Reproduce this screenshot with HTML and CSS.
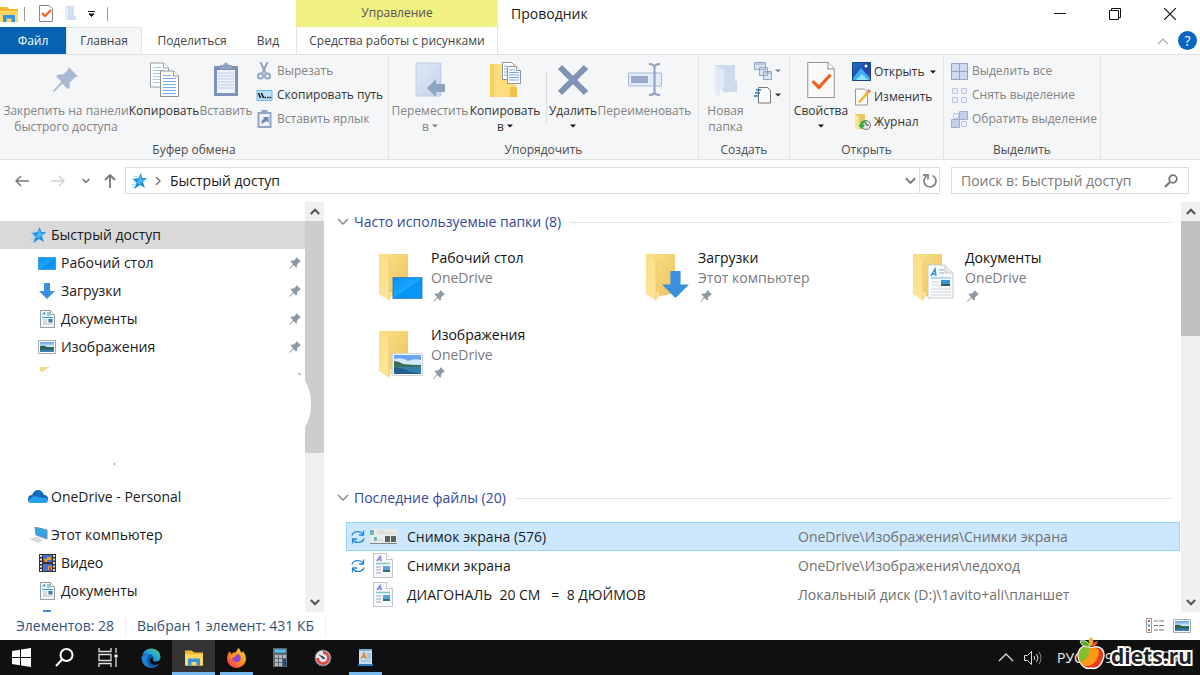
FILE: index.html
```html
<!DOCTYPE html>
<html lang="ru">
<head>
<meta charset="utf-8">
<title>Проводник</title>
<link rel="stylesheet" href="styles.css">
</head>
<body>
<svg class="defs" aria-hidden="true">
  <defs>
    <linearGradient id="gFolder" x1="0" y1="0" x2="1" y2="1"><stop offset="0" stop-color="#fbe08a"/><stop offset="1" stop-color="#e9c35c"/></linearGradient>
    <linearGradient id="gFlap" x1="0" y1="0" x2="1" y2="1"><stop offset="0" stop-color="#fbdc7e"/><stop offset="1" stop-color="#ffe9a6"/></linearGradient>
    <linearGradient id="gBlue" x1="0" y1="0" x2="1" y2="1"><stop offset="0" stop-color="#0a90f5"/><stop offset=".5" stop-color="#1ba6ff"/><stop offset=".52" stop-color="#0594f8"/><stop offset="1" stop-color="#0a98fb"/></linearGradient>
    <linearGradient id="gSky" x1="0" y1="0" x2="0" y2="1"><stop offset="0" stop-color="#5f9be8"/><stop offset=".45" stop-color="#d5ecfa"/><stop offset=".5" stop-color="#3f6f63"/><stop offset=".72" stop-color="#2f6a80"/><stop offset="1" stop-color="#3d8fc4"/></linearGradient>
    <linearGradient id="gPale" x1="0" y1="0" x2="1" y2="1"><stop offset="0" stop-color="#dfe8f5"/><stop offset="1" stop-color="#c5d4ea"/></linearGradient>
    <linearGradient id="gPhoto" x1="0" y1="0" x2="1" y2="1"><stop offset="0" stop-color="#1d78c8"/><stop offset=".6" stop-color="#1c46a0"/><stop offset="1" stop-color="#6b4bb0"/></linearGradient>
    <linearGradient id="gEdge" x1="0" y1="1" x2="1" y2="0"><stop offset="0" stop-color="#0c5fb4"/><stop offset=".5" stop-color="#1f9ede"/><stop offset="1" stop-color="#5fd36c"/></linearGradient>
    <linearGradient id="gFox" x1="1" y1="0" x2="0" y2="1"><stop offset="0" stop-color="#ffe03a"/><stop offset=".5" stop-color="#ff8a1e"/><stop offset="1" stop-color="#f0305a"/></linearGradient>
    <symbol id="pin" viewBox="0 0 24 24"><path d="M15 0 24 9l-3 1-5 5 0 5-2 1-5-5L1 24l-1-1 8-9-5-5 2-2 5 0 4-4z"/></symbol>
    <symbol id="star" viewBox="0 0 16 16"><path d="M3 3.500h3M1 6h4M2 9h3M1 12h4M1 14.500h3" stroke="#8fd0f5"/><path d="M9.500 0l2 5H16l-4 4 2 6-5-3-5.500 4 2-6.500L2 6l5.500-1z" fill="#1f93e0"/><path d="M9.500 2l1.300 4.500h3L9 11 6 10z" fill="#4cb6f3"/></symbol>
    <symbol id="desk" viewBox="0 0 18 13"><path d="M.5.500h17v12H.500z" fill="url(#gBlue)" stroke="#1279cc" stroke-width=".6"/></symbol>
    <symbol id="down" viewBox="0 0 16 16"><path d="M5 0h6v8h5l-8 8-8-8h5z" fill="#3b8fe0"/></symbol>
    <symbol id="doc" viewBox="0 0 15 18"><path d="M.5.500h10l4 4v13H.500z" fill="#f3f6f8" stroke="#979ca0"/><path d="M10.500.500v4h4" fill="#fff" stroke="#a5a9ac"/><path d="M2 5l2.500-3L5 5M7 3h3M7 5h3M2 7.500h11" stroke="#2f9ede" fill="none"/><path d="M3 10h4M3 12h4M3 14h9" stroke="#b7bdc2"/><path d="M8.500 9h4v3.500h-4z" fill="#3c7f9d"/></symbol>
    <symbol id="pic" viewBox="0 0 18 14"><path d="M.5.500h17v13H.500z" fill="#fff" stroke="#a8adb1"/><path d="M2 2h14v10H2z" fill="url(#gSky)"/><path d="M2 6q4-1 7 1 4 1 7 1v1H2z" fill="#305f50"/></symbol>
    <symbol id="photo" viewBox="0 0 31 23"><path d="M.5.500h30v22H.500z" fill="#f6f8fa" stroke="#cfd5da"/><path d="M2 2h27v19H2z" fill="#6aa3ee"/><path d="M2 6q9-2 14 2 6-3 13-1v5H2z" fill="#d4eafb"/><path d="M2 8q5 0 9 3 8 1 18 1v2H2z" fill="#3f6d55"/><path d="M2 14h27v7H2z" fill="#3780ad"/><path d="M2 14q10 1 14 4l13 3H2z" fill="#245f86"/></symbol>
    <symbol id="folder" viewBox="0 0 46 50"><path d="M1 1h29v39l-19 4z" fill="url(#gFolder)"/><path d="M1 1l10 6v31l3 2v1l-3 7L1 41z" fill="url(#gFlap)"/><path d="M11 7v40" stroke="#efca6b"/></symbol>
    <symbol id="pages" viewBox="0 0 29 35"><g fill="#fff" stroke="#9a9da1"><path d="M.5.500h13l5 5v19H.500z"/><path d="M13.500.500v5h5"/></g><path d="M3 5h8M3 8h12M3 11h12M3 14h12M3 17h12M3 20h12" stroke="#a9c9f2"/><g fill="#fff" stroke="#8f9296"><path d="M10.500 8.500h13l5 5v20.500h-18z"/><path d="M23.500 8.500v5h5"/></g><path d="M13 13h8M13 16h13M13 19h13M13 22h13M13 25h13M13 28h13M13 31h13" stroke="#74a9ee"/></symbol>
    <symbol id="check" viewBox="0 0 26 34"><path d="M.5.500h19l6 6v27H.500z" fill="#fafafa" stroke="#94979a"/><path d="M19.500.500v6h6" fill="#fff" stroke="#94979a"/><path d="M5 18l6 6L22 12" fill="none" stroke="#f4601c" stroke-width="3"/></symbol>
    <symbol id="chev" viewBox="0 0 12 8"><path d="M1 1l5 5 5-5" fill="none" stroke="currentColor" stroke-width="1.500"/></symbol>
    <symbol id="chevBold" viewBox="0 0 12 8"><path d="M1 1l5 5 5-5" fill="none" stroke="currentColor" stroke-width="2.500"/></symbol>
    <symbol id="chevUp" viewBox="0 0 12 8"><path d="M1 7l5-5 5 5" fill="none" stroke="currentColor" stroke-width="2.500"/></symbol>
    <symbol id="sync" viewBox="0 0 14 14"><path d="M1 5.500A6 5 0 0 1 12 4M13 8.500A6 5 0 0 1 2 10M12.500.500V5H8M1.500 13.500V9H6" fill="none" stroke="#2585d8" stroke-width="1.300"/></symbol>
    <symbol id="rdoc" viewBox="0 0 20 25"><path d="M.5.500h13l6 6v18H.500z" fill="#f8f9fa" stroke="#c3c6c9"/><path d="M13.500.500v6h6" fill="#fff" stroke="#c3c6c9"/><path d="M4 8l3-4 1 4" fill="none" stroke="#8d86e4" stroke-width="2"/><path d="M3 10.500h14" stroke="#7cc6c4" stroke-width="1.500"/><path d="M3 14h5M3 17h5M3 20h5" stroke="#bcc1df" stroke-width="1.500"/><path d="M10 13h7v6h-7z" fill="#5ba2d6"/><path d="M10 17h7v2h-7z" fill="#3c6f78"/></symbol>
    <symbol id="explorer" viewBox="0 0 18 16"><path d="M0 1h7l2 2h9v13H0z" fill="#f5b92e"/><path d="M0 5h18v11H0z" fill="#ffd766"/><path d="M3 16V9h12v7h-3.500v-3.500h-5V16z" fill="#3c93dc"/></symbol>
    <symbol id="tri" viewBox="0 0 6 4"><path d="M0 .5h6L3 3.500z" fill="currentColor"/></symbol>
  </defs>
</svg>

<header class="head">
  <div class="qat">
    <svg width="18" height="16"><use href="#explorer"/></svg><i class="bar"></i>
    <svg class="qcheck" width="14" height="17" viewBox="0 0 14 17"><path d="M.5.500h10l3 3v13H.500z" fill="#fff" stroke="#888"/><path d="M3 8l3 3 6-6" fill="none" stroke="#f4601c" stroke-width="2"/></svg>
    <svg class="qnew" width="11" height="15" viewBox="0 0 11 15"><path d="M0 0h9v10h2v4H0z" fill="#d3dff0"/><path d="M0 0l3 2v12l-3 1z" fill="#e6eef8"/></svg>
    <svg class="qmenu" width="7" height="6" viewBox="0 0 7 6"><path d="M0 .5h7M1 3h5L3.500 5.500z" stroke="#111" fill="#111" stroke-width="1"/></svg><i class="bar"></i>
  </div>
  <div class="ctx">Управление</div>
  <div class="title">Проводник</div>
  <div class="winbtns">
    <button aria-label="Свернуть"><svg width="12" height="12" viewBox="0 0 12 12"><path d="M0 5.500h12" stroke="#111"/></svg></button>
    <button aria-label="Окно"><svg width="12" height="12" viewBox="0 0 12 12"><path d="M.5 2.500h9v9h-9zM2.500 2V.500h9v9H10" stroke="#111" fill="none"/></svg></button>
    <button aria-label="Закрыть"><svg width="12" height="12" viewBox="0 0 12 12"><path d="M0 0l12 12M12 0L0 12" stroke="#111" stroke-width="1.200"/></svg></button>
  </div>
  <nav class="tabs">
    <button class="tab file">Файл</button><button class="tab on">Главная</button><button class="tab">Поделиться</button><button class="tab view">Вид</button>
  </nav>
  <button class="tab ctxtab">Средства работы с рисунками</button>
  <div class="help"><svg class="gray" width="12" height="8" viewBox="0 0 12 8"><path d="M1 7l5-5 5 5" fill="none" stroke="currentColor" stroke-width="1.200"/></svg><button class="q" aria-label="Справка">?</button></div>
</header>

<section class="ribbon">
  <div class="group g1">
    <div class="tools">
      <button class="big off"><svg width="26" height="36" viewBox="0 -5 26 36" fill="#a9b9d3"><use href="#pin" width="25" height="25"/></svg><span>Закрепить на панели<br>быстрого доступа</span></button>
      <button class="big"><svg width="29" height="36"><use href="#pages"/></svg><span>Копировать</span></button>
      <button class="big off"><svg width="26" height="36" viewBox="0 0 26 36"><path d="M1 4h24v30H1z" fill="#7d92b8" /><path d="M4 8h18v23H4z" fill="#eef3fb"/><path d="M5 11h16M5 14h16M5 17h16M5 20h16M5 23h16M5 26h16" stroke="#bccbe4"/><path d="M7 3h3q3-5 6 0h3v4H7z" fill="#8fa2c4"/></svg><span>Вставить</span></button>
      <div class="small">
        <button class="off"><svg width="16" height="18" viewBox="0 0 16 18" fill="none" stroke="#93a5c6" stroke-width="2"><path d="M4 0l5 11M11 0L6 11"/><circle cx="4" cy="14" r="2.500"/><circle cx="11" cy="14" r="2.500"/></svg>Вырезать</button>
        <button><svg width="16" height="11" viewBox="0 0 16 11"><path d="M.5.500h15v10H.500z" fill="#b9e2fa" stroke="#6fb5df"/><path d="M2 3l2 5M5 3l2 5M8 7.500h1.500M10.500 7.500H12M13 7.500h1.500" stroke="#111" stroke-width="1.500"/></svg>Скопировать путь</button>
        <button class="off"><svg width="14" height="18" viewBox="0 0 14 18"><path d="M1 3h12v14H1z" fill="#eef3fb" stroke="#93a5c6" stroke-width="2"/><path d="M4 0h6v4H4z" fill="#93a5c6"/><path d="M4 14V11l3-3-2-1h6v6l-2-2z" fill="#6f86ad"/></svg>Вставить ярлык</button>
      </div>
    </div>
    <div class="cap">Буфер обмена</div>
  </div>
  <div class="group g2">
    <div class="tools">
      <button class="big off"><svg width="32" height="36" viewBox="0 0 32 36"><path d="M2 1h25v33H2z" fill="url(#gPale)" stroke="#bfcfe7"/><path d="M13 26l9-9v5h9v8h-9v5z" fill="#8fa3c4"/></svg><span>Переместить<br>в <svg class="tri" width="6" height="4"><use href="#tri"/></svg></span></button>
      <button class="big"><svg width="32" height="36" viewBox="0 0 32 36"><path d="M1 2h26v33H1z" fill="#ffdd7c"/><path d="M1 2h4v33H1z" fill="#fbd063"/><path d="M21 25h7v10h-7z" fill="#f0c14c"/><g fill="#fff" stroke="#8f9296"><path d="M13.500.500h9l3 3v14h-12z"/><path d="M18.500 4.500h9l4 4v13h-13z"/><path d="M27.500 4.500v4h4"/></g><path d="M15 4h3M15 7h3M15 10h3M15 13h3M20 8h6M20 10.500h10M20 13h10M20 15.500h10M20 18h10" stroke="#74a9ee"/></svg><span>Копировать<br>в <svg class="tri" width="6" height="4"><use href="#tri"/></svg></span></button>
      <i class="sep"></i>
      <button class="big"><svg width="30" height="36" viewBox="0 0 30 36"><path d="M2 5l26 26M28 5L2 31" stroke="#8093b5" stroke-width="6"/></svg><span>Удалить<br><svg class="tri" width="6" height="4"><use href="#tri"/></svg></span></button>
      <button class="big off"><svg width="34" height="36" viewBox="0 0 34 36"><path d="M.5 11h33v13H.500z" fill="#e3ecf8" stroke="#a8bad8"/><path d="M3 14h17v7H3z" fill="#9aacca"/><path d="M21 2q5 0 5.500 3Q27 2 32 2M26.500 4v27M21 33q5 0 5.500-3 .5 3 5.500 3" fill="none" stroke="#8b9fc0" stroke-width="2"/></svg><span>Переименовать</span></button>
    </div>
    <div class="cap">Упорядочить</div>
  </div>
  <div class="group g3">
    <div class="tools">
      <button class="big off"><svg width="24" height="36" viewBox="0 0 24 36"><path d="M1 3h20v16h2v11H9z" fill="#cddbee"/><path d="M1 3l9 5v18l-4 3v6l-5-3z" fill="#e1eaf6"/></svg><span>Новая<br>папка</span></button>
      <div class="mini">
        <button aria-label="Создать элемент" class="off"><svg width="18" height="18" viewBox="0 0 18 18" fill="#dbe5f3" stroke="#93a7ca"><path d="M.5.500h11v7H.500zM5.500 5.500h8v8h-8zM9.500 9.500h8v8h-8zM.5 2h11M9.500 11h8"/></svg><svg width="6" height="4"><use href="#tri"/></svg></button>
        <button aria-label="Простой доступ"><svg width="18" height="18" viewBox="0 0 18 18"><path d="M4.500 1.500h9l3 3v12.500h-12z" fill="#fafafa" stroke="#777"/><path d="M2 4h5M1 7h5M0 10h4" stroke="#2878b8" stroke-width="1.500"/></svg><svg width="6" height="4"><use href="#tri"/></svg></button>
      </div>
    </div>
    <div class="cap">Создать</div>
  </div>
  <div class="group g4">
    <div class="tools">
      <button class="big"><svg width="28" height="36"><use href="#check"/></svg><span>Свойства<br><svg class="tri" width="6" height="4"><use href="#tri"/></svg></span></button>
      <div class="small open">
        <button><svg width="19" height="19" viewBox="0 0 19 19"><path d="M.5.500h18v18H.500z" fill="url(#gPhoto)" stroke="#183f8c"/><path d="M1 16L9 6l9 10v2H1z" fill="#3aaef0"/><path d="M4 18l6-6 6 6z" fill="#8ee2fb"/><circle cx="14" cy="4" r="1.500" fill="#fff"/></svg>Открыть <svg class="tri" width="6" height="4"><use href="#tri"/></svg></button>
        <button><svg width="19" height="18" viewBox="-3 0 19 18"><path d="M.5 1h9l3 3v13H.500z" fill="#fafafa" stroke="#999"/><path d="M3 14L13 2l2 2L5 15z" fill="#f2b632"/><path d="M12 3l1.500-2 2.500 2-1.500 2z" fill="#e77b70"/></svg>Изменить</button>
        <button><svg width="19" height="18" viewBox="-3 0 19 18"><path d="M0 1h10v15H4z" fill="#edc75f"/><path d="M0 1l4 3v13l-4-2z" fill="#ffe596"/><circle cx="11" cy="12" r="4.500" fill="#e4e7e4" stroke="#777"/><path d="M11 9v3h3" fill="none" stroke="#555"/><path d="M10 7q-5 1-5 5H3l4 4 3-4H8q0-2 3-2z" fill="#35a94b"/></svg>Журнал</button>
      </div>
    </div>
    <div class="cap">Открыть</div>
  </div>
  <div class="group g5">
    <div class="tools">
      <div class="small off">
        <button><svg width="17" height="17" viewBox="0 0 17 17"><path d="M.5.500h16v16H.500zM8.500 0v17M0 8.500h17" fill="#cfdbed" stroke="#8fa5cb"/></svg>Выделить все</button>
        <button><svg width="17" height="17" viewBox="0 0 17 17"><path d="M1.500 1.500h5v5h-5zM10.500 1.500h5v5h-5zM1.500 10.500h5v5h-5zM10.500 10.500h5v5h-5z" fill="#eaf0f9" stroke="#b8c8e2"/></svg>Снять выделение</button>
        <button><svg width="17" height="17" viewBox="0 0 17 17"><path d="M2.500 2.500h5v5h-5zM10.500 10.500h5v5h-5z" fill="#eaf0f9" stroke="#b8c8e2"/><path d="M8.500.500h8v8h-8zM.5 8.500h8v8h-8z" fill="#c3d1e8" stroke="#9db0d0"/></svg>Обратить выделение</button>
      </div>
    </div>
    <div class="cap">Выделить</div>
  </div>
</section>

<div class="nav">
  <div class="arrows">
    <button aria-label="Назад"><svg width="14" height="12" viewBox="0 0 14 12"><path d="M14 6H1M6 1L1 6l5 5" fill="none" stroke="#777" stroke-width="1.500"/></svg></button>
    <button aria-label="Вперёд"><svg width="14" height="12" viewBox="0 0 14 12"><path d="M0 6h13M8 1l5 5-5 5" fill="none" stroke="#d0d0d0" stroke-width="1.500"/></svg></button>
    <button aria-label="Последние"><svg width="8" height="6"><use href="#chevBold"/></svg></button>
    <button aria-label="Вверх"><svg width="12" height="14" viewBox="0 0 12 14"><path d="M6 14V1M1 6l5-5 5 5" fill="none" stroke="#777" stroke-width="1.800"/></svg></button>
  </div>
  <div class="addr">
    <svg width="16" height="16"><use href="#star"/></svg>
    <svg class="crumb" width="6" height="8" viewBox="0 0 6 8"><path d="M1 0l4 4-4 4" fill="none" stroke="#777" stroke-width="1.500"/></svg>
    <span>Быстрый доступ</span>
    <button class="drop" aria-label="Показать журнал"><svg width="11" height="8" viewBox="0 0 12 8"><path d="M1 1l5 5 5-5" fill="none" stroke="currentColor" stroke-width="2"/></svg></button>
    <button class="ref" aria-label="Обновить"><svg width="14" height="15" viewBox="0 0 14 15"><path d="M9.500 2.500A6 6 0 1 1 3.500 3M0 2h5v4.500" fill="none" stroke="#888" stroke-width="1.800"/></svg></button>
  </div>
  <label class="search"><input type="text" placeholder="Поиск в: Быстрый доступ" aria-label="Поиск"><svg width="14" height="14" viewBox="0 0 14 14"><circle cx="9" cy="5" r="3.800" fill="none" stroke="#777" stroke-width="1.800"/><path d="M6 8l-5 5" stroke="#777" stroke-width="2.200"/></svg></label>
</div>

<main class="work">
  <aside class="side">
    <ul>
      <li class="root sel"><svg width="16" height="16"><use href="#star"/></svg><span>Быстрый доступ</span></li>
      <li><svg width="18" height="13"><use href="#desk"/></svg><span>Рабочий стол</span><svg class="pin" width="12" height="12"><use href="#pin"/></svg></li>
      <li><svg width="16" height="16"><use href="#down"/></svg><span>Загрузки</span><svg class="pin" width="12" height="12"><use href="#pin"/></svg></li>
      <li><svg width="15" height="18"><use href="#doc"/></svg><span>Документы</span><svg class="pin" width="12" height="12"><use href="#pin"/></svg></li>
      <li><svg width="18" height="14"><use href="#pic"/></svg><span>Изображения</span><svg class="pin" width="12" height="12"><use href="#pin"/></svg></li>
      <li class="blank"><svg width="305" height="122" viewBox="0 0 305 122"><path d="M40 6h10l-5 3-2 2-3-1z" fill="#f5d987"/><path d="M298 12l3 2" stroke="#778"/><path d="M114 103h1" stroke="#446" stroke-width="1.500"/></svg></li>
      <li class="root"><svg width="20" height="14" viewBox="0 0 20 14"><path d="M4 13a4 4 0 0 1 0-8Q6 0 10 0q4 0 6 5a4 4 0 0 1 0 8z" fill="#0f6cbd"/><path d="M3 13q-2 0-3-2 2-3 6-5l8 2q5-1 6 3-1 2-3 2z" fill="#28a0ea"/></svg><span>OneDrive - Personal</span></li>
      <li class="root pc"><svg width="19" height="16" viewBox="0 0 19 16"><path d="M6 0l12 3v9L7 8z" fill="#35a3e8" stroke="#6f91a8"/><path d="M0 12l8-2 6 3-5 3z" fill="#d5dadf"/></svg><span>Этот компьютер</span></li>
      <li><svg width="17" height="18" viewBox="0 0 17 18"><path d="M0 0h17v18H0z" fill="#333"/><path d="M4 1h9v7H4zM4 10h9v7H4z" fill="#3f73d9"/><path d="M5 5h3v3H5zM8 3h4v3H8zM9 12h4v4H9z" fill="#e0a328"/><path d="M4 6h2v2H4zM10 13h2v3h-2z" fill="#c9402f"/><path d="M2 1v16M15 1v16" stroke="#ddd" stroke-width="2" stroke-dasharray="2 1.500"/></svg><span>Видео</span></li>
      <li><svg width="15" height="18"><use href="#doc"/></svg><span>Документы</span></li>
      <li class="next"><svg width="16" height="2"><path d="M4 0h8v2H4z" fill="#3b8fe0"/></svg></li>
    </ul>
    <div class="scroll left"><button aria-label="Вверх"><svg width="10" height="7"><use href="#chevUp"/></svg></button><div class="thumb"><svg width="19" height="46" viewBox="0 0 19 46"><path d="M0 0q6 9 6 23T0 46z" fill="#fff"/></svg></div><button class="end" aria-label="Вниз"><svg width="10" height="7"><use href="#chevBold"/></svg></button></div>
  </aside>
  <section class="content">
    <div class="pane">
      <h2><svg width="12" height="8"><use href="#chev"/></svg>Часто используемые папки (8)</h2>
      <div class="folders">
        <article><svg width="46" height="50"><use href="#folder"/><use href="#desk" x="14" y="24" width="31" height="22"/></svg><div><b>Рабочий стол</b><p>OneDrive</p><svg class="pin" width="12" height="12"><use href="#pin"/></svg></div></article>
        <article><svg width="46" height="50"><use href="#folder"/><use href="#down" x="17" y="18" width="27" height="27"/></svg><div><b>Загрузки</b><p>Этот компьютер</p><svg class="pin" width="12" height="12"><use href="#pin"/></svg></div></article>
        <article><svg width="46" height="50" viewBox="0 0 46 50"><use href="#folder" width="46" height="50"/><path d="M16 12h17l8 8v25H16z" fill="#fafbfc" stroke="#c6c9cc"/><path d="M33 12v8h8" fill="#e7eaec" stroke="#c6c9cc"/><path d="M19 23l4-7 1 7M20 21h4" stroke="#2d95dd" stroke-width="1.500" fill="none"/><path d="M27 17h5M27 20h5M19 25h20" stroke="#62b3e7"/><path d="M19 29h8M19 32h8M19 36h20M19 39h20M19 42h20" stroke="#d0d4d7"/><path d="M29 27h9v6h-9z" fill="#3b93cd"/><path d="M29 31h9v2h-9z" fill="#345f55"/></svg><div><b>Документы</b><p>OneDrive</p><svg class="pin" width="12" height="12"><use href="#pin"/></svg></div></article>
        <article><svg width="46" height="50"><use href="#folder"/><use href="#photo" x="14" y="23" width="31" height="23"/></svg><div><b>Изображения</b><p>OneDrive</p><svg class="pin" width="12" height="12"><use href="#pin"/></svg></div></article>
      </div>
      <h2><svg width="12" height="8"><use href="#chev"/></svg>Последние файлы (20)</h2>
      <table>
        <tr class="sel"><td class="ic"><svg width="14" height="14"><use href="#sync"/></svg></td><td class="th"><svg width="27" height="15" viewBox="0 0 27 15"><path d="M0 0h27v15H0z" fill="#e9ece8"/><path d="M0 1h4v5H0zM4 8h3v4H4z" fill="#6fb3bd"/><path d="M7 2h8M7 4h17M5 11h8" stroke="#c9cfcc"/><path d="M15 7h5v6h-5zM21 7h5v6h-5z" fill="#57635f"/><path d="M0 14.500h27" stroke="#7d868d"/></svg></td><td>Снимок экрана (576)</td><td class="path">OneDrive\Изображения\Снимки экрана</td></tr>
        <tr><td class="ic"><svg width="14" height="14"><use href="#sync"/></svg></td><td class="th"><svg width="20" height="25"><use href="#rdoc"/></svg></td><td>Снимки экрана</td><td class="path">OneDrive\Изображения\ледоход</td></tr>
        <tr><td class="ic"></td><td class="th"><svg width="20" height="25"><use href="#rdoc"/></svg></td><td class="pre">ДИАГОНАЛЬ  20 СМ   =  8 ДЮЙМОВ</td><td class="path">Локальный диск (D:)\1avito+ali\планшет</td></tr>
      </table>
    </div>
    <div class="scroll right"><button aria-label="Вверх"><svg width="10" height="7"><use href="#chevUp"/></svg></button><div class="thumb"></div><button class="end" aria-label="Вниз"><svg width="10" height="7"><use href="#chevBold"/></svg></button></div>
  </section>
</main>

<div class="status">
  <span>Элементов: 28</span><span>Выбран 1 элемент: 431 КБ</span>
  <div class="views">
    <button aria-label="Таблица"><svg width="18" height="16" viewBox="0 0 18 16"><path d="M.5.500h5v14h-5z" fill="#fff" stroke="#999"/><path d="M2 3h2M2 12h2" stroke="#c55" stroke-width="2"/><path d="M2 7.500h2" stroke="#48b" stroke-width="2"/><path d="M8 3h4M13 3h5M8 7.500h4M13 7.500h5M8 12h4M13 12h5" stroke="#777"/></svg></button>
    <button aria-label="Крупные значки"><svg width="18" height="14"><use href="#pic"/></svg></button>
  </div>
</div>

<footer class="task">
  <button aria-label="Пуск"><svg width="19" height="19" viewBox="0 0 19 19"><path d="M0 3l8-1.200V9H0zM9 1.600L19 0v9H9zM0 10h8v7.200L0 16zM9 10h10v9L9 17.400z" fill="#fff"/></svg></button>
  <button aria-label="Поиск"><svg width="19" height="19" viewBox="0 0 19 19"><circle cx="11.500" cy="7" r="6" fill="none" stroke="#fff" stroke-width="2"/><path d="M7 11.500l-6 6.500" stroke="#fff" stroke-width="2"/></svg></button>
  <button aria-label="Представление задач"><svg width="20" height="19" viewBox="0 0 20 19" fill="none" stroke="#ddd" stroke-width="1.300"><path d="M1 0v3.500h12V0M1 6.500h12v6H1zM1 19v-3.500h12V19M18 0v5M18 10v9"/><path d="M16.500 6.500h3v3h-3z" fill="#fff" stroke="none"/></svg></button>
  <button aria-label="Edge"><svg width="20" height="20" viewBox="0 0 20 20"><path d="M1 7Q4 0 11 .500q8 1 8.500 8 0 5-5 5-3 0-2.500-2 1-1 0-3-2-3-6-2.500-3 0-5 1z" fill="url(#gEdge)"/><path d="M.5 10Q1 6 6 6q5 0 6 4-2-1-3 1-1 4 3 6 3 1 6-1-3 4-8 4-9-1-9.500-10z" fill="#1c83d6"/><path d="M6 12q0-5 4-5 2 1 2 3-2-1-3 1-1 4 3 6 3 1 6-1-3 4-8 3-4-2-4-7z" fill="#0e56a6"/></svg></button>
  <button aria-label="Проводник" class="act"><svg width="18" height="17"><use href="#explorer"/></svg></button>
  <button aria-label="Firefox" class="run"><svg width="19" height="20" viewBox="0 0 19 20"><path d="M12 0q1 3 3 5l1-2q3 4 3 8a9.500 9 0 0 1-19 0Q0 6 3 3l1 3Q7 4 9 4q1-3 3-4z" fill="url(#gFox)"/><circle cx="9.500" cy="10" r="4.200" fill="#8c46d8"/><path d="M4 7q4-2 7 0-3 0-3 2-3 0-3 2-2-1-1-4z" fill="#ff9824"/></svg></button>
  <button aria-label="Калькулятор"><svg width="14" height="19" viewBox="0 0 14 19"><path d="M0 0h14v19H0z" fill="#5d6870"/><path d="M1.500 1.500h11v3h-11z" fill="#49c5f0"/><path d="M2 7h3v3H2zM6 7h3v3H6zM10 7h3v3h-3zM2 11h3v3H2zM6 11h3v3H6zM2 15h3v3H2zM6 15h3v3H6z" fill="#b4bbc1"/><path d="M10 11h3v7h-3z" fill="#154b87"/></svg></button>
  <button aria-label="Таймер"><svg width="18" height="18" viewBox="0 0 18 18"><circle cx="9" cy="9" r="8" fill="#dfe6ee" stroke="#5c6a7d"/><path d="M9 3.500A5.500 5.500 0 1 1 3.500 9" fill="none" stroke="#df4c3f" stroke-width="3"/><path d="M4 5l6 3 1 2-2 0z" fill="#333"/></svg></button>
  <button aria-label="WordPad" class="run"><svg width="15" height="17" viewBox="0 0 15 17"><path d="M1 0h13v14l1 3H0l1-3z" fill="#c6dff2"/><path d="M1 0h13v2H1z" fill="#6fb0df"/><path d="M3 10l3-6 2 6M4 8h4" fill="none" stroke="#e38a35" stroke-width="1.600"/><path d="M9 5h4M9 7h4M9 9h4M3 12h9" stroke="#86a9c8"/><path d="M0 15h15v2H0z" fill="#3178b8"/></svg></button>
  <div class="tray"><svg width="16" height="9" viewBox="0 0 16 9"><path d="M1 8l7-7 7 7" fill="none" stroke="#ddd" stroke-width="1.300"/></svg><svg width="19" height="14" viewBox="0 0 19 14" fill="none" stroke="#ddd"><path d="M.5 4.500h3l4-4v13l-4-4h-3zM10 5q1.500 2 0 4M12.500 3q3 4 0 8"/><path d="M15 1q4 6 0 12" stroke="#888"/></svg><span class="lang">РУС</span><span class="clock">19</span></div>
  <svg class="note" width="16" height="14" viewBox="0 0 16 14"><path d="M1 1h14v9h-4v3l-3-3H1z" fill="none" stroke="#ddd"/></svg>
  <div class="mark"><svg width="28" height="34" viewBox="0 0 28 34"><path d="M14 12Q7 8 3 13q-4 6 0 13 4 8 11 6 7 2 11-6 4-8 0-13-4-4-11-1z" fill="#e93a22" stroke="#fff" stroke-width="1.500"/><path d="M14 12Q7 9 3 14q-3 6 0 12 4 6 11 3 8-4 8-15-4-3-8-2z" fill="#fb9a18"/><path d="M3 14q4-5 10-2 0 10-9 14-4-6-1-12z" fill="#83bf2e"/><path d="M13 11Q4 11 3 5q8-2 10 6z" fill="#55ad28" stroke="#fff" stroke-width=".8"/><path d="M13 10Q10 4 14 1q4 3 1 9z" fill="#fba81c"/><path d="M15 11q0-5 6-6-1 5-6 6z" fill="#ed5b28"/></svg><span>diets.ru</span></div>
</footer>
</body>
</html>
```
FILE: styles.css
```css
* { box-sizing: border-box; }
body { margin: 0; height: 100vh; display: flex; flex-direction: column; overflow: hidden; background: #fff; color: #1a1a1a; font: 14px/20px "Open Sans", "Noto Sans", sans-serif; }
button { padding: 0; border: 0; background: none; color: inherit; font: inherit; display: flex; align-items: center; justify-content: center; white-space: nowrap; }
svg { display: block; flex: none; }
ul, h2, p { margin: 0; padding: 0; }
.defs { position: absolute; width: 0; height: 0; }

/* title bar and tabs */
.head { display: grid; grid-template-columns: 296px 202px 1fr auto; grid-template-rows: 27px 27px; font-size: 12px; flex: none; }
.qat { display: flex; align-items: center; }
.bar { width: 1px; height: 14px; margin-left: 6px; background: #999; }
.qcheck { margin-left: 14px; }
.qnew { margin-left: 12px; }
.qmenu { margin-left: 12px; margin-right: 6px; }
.ctx { background: #f0f083; color: #555; text-align: center; line-height: 26px; }
.title { padding-left: 13px; font-size: 14px; line-height: 28px; }
.winbtns { display: flex; gap: 43px; padding-right: 24px; }
.tabs { display: flex; }
.tab { color: #444; }
.file { width: 66px; background: #0563b1; color: #fff; }
.on { width: 76px; background: #f5f6f7; border: 1px solid #e2e3e4; border-bottom: 0; }
.tab:nth-child(3) { width: 100px; }
.view { width: 52px; }
.ctxtab { border: solid #e4e4e4; border-width: 0 1px; }
.help { grid-column: 3 / 5; display: flex; justify-content: flex-end; align-items: center; gap: 9px; padding-right: 3px; }
.gray { color: #aaa; }
.q { width: 19px; height: 19px; border-radius: 50%; background: #0b64c0; color: #fff; font-size: 14px; }

/* ribbon */
.ribbon { display: flex; flex: none; min-height: 106px; padding: 2px 0 1px; background: #f5f6f7; border: solid #e0e1e3; border-width: 1px 0; font-size: 12px; line-height: 16px; color: #333; }
.group { display: flex; flex-direction: column; justify-content: space-between; border-right: 1px solid #e1e2e4; }
.tools { display: grid; padding-top: 5px; align-items: start; }
.g1 { width: 389px; } .g1 .tools { grid-template-columns: 132px 64px 60px 1fr; }
.g2 { width: 310px; } .g2 .tools { grid-template-columns: 82px 68px 14px 40px 1fr; padding-right: 2px; }
.g3 { width: 91px; } .g3 .tools { grid-template-columns: 53px 1fr; }
.g4 { width: 154px; } .g4 .tools { grid-template-columns: 62px 1fr; }
.g5 { width: 157px; padding-left: 7px; }
.g5 .cap { padding-right: 7px; }
.big { flex-direction: column; gap: 5px; }
.big .tri, .small .tri { display: inline-block; vertical-align: 3px; color: #111; }
.off, .off .tri { color: #838383; }
.small { display: flex; flex-direction: column; gap: 6px; }
.small button { justify-content: flex-start; height: 18px; gap: 4px; }
.g1 .small svg { width: 17px; }
.open { gap: 6px; }
.open button { height: 19px; gap: 3px; }
.open .tri { margin-left: 3px; }
.mini { display: flex; flex-direction: column; gap: 6px; padding-left: 2px; }
.mini button { height: 18px; gap: 3px; justify-content: flex-start; }
.sep { width: 1px; height: 52px; margin: 9px auto 0; background: #dcdddf; }
.cap { text-align: center; color: #4c4c4c; }

/* address row */
.nav { display: flex; align-items: flex-start; flex: none; height: 42px; padding: 7px 11px 0 15px; }
.arrows { display: grid; grid-template-columns: 36px 31px 22px 21px; height: 27px; color: #777; }
.arrows button { justify-content: flex-start; }
.addr { flex: 1; display: flex; align-items: center; height: 27px; padding-left: 5px; border: 1px solid #dcdcdc; }
.crumb { margin: 0 9px 0 8px; }
.drop { margin-left: auto; width: 18px; color: #777; }
.ref { width: 20px; height: 100%; border-left: 1px solid #dcdcdc; }
.search { width: 238px; height: 27px; display: flex; align-items: center; margin-left: 11px; padding: 0 10px 0 9px; border: 1px solid #dcdcdc; }
.search input { flex: 1; min-width: 0; padding: 0; border: 0; outline: 0; font: inherit; background: none; }
.search input::placeholder { color: #7a7a7a; opacity: 1; }

/* work area */
.work { flex: 1; min-height: 0; display: flex; }
.side { display: flex; flex: none; width: 324px; overflow: hidden; }
.side ul { flex: 1; list-style: none; padding-top: 19px; min-width: 0; }
.side li { display: grid; grid-template-columns: 18px 1fr 12px; justify-items: start; align-items: center; gap: 5px; height: 28px; padding: 0 4px 0 38px; }
.side li > svg:first-child { justify-self: center; }
.side .root { padding-left: 28px; gap: 3px; grid-template-columns: 20px 1fr; }
.side .sel { background: #d9d9d9; }
.side .blank { display: block; height: 122px; padding: 0; }
.side .pc { margin-top: 10px; }
.side .next { align-items: start; padding-top: 5px; }
.pin { fill: #8d99a3; }
.scroll { display: flex; flex-direction: column; width: 19px; flex: none; background: #f0f0f0; color: #555; }
.scroll button { height: 19px; flex: none; }
.scroll .end { margin-top: auto; }
.thumb { background: #cdcdcd; }
.left .thumb { flex: 0 0 232px; padding-top: 160px; }
.right .thumb { flex: 0 0 115px; background: #c1c1c1; }
.content { flex: 1; display: flex; min-width: 0; overflow: hidden; }
.pane { flex: 1; min-width: 0; padding-top: 10px; }
h2 { display: flex; align-items: center; gap: 5px; padding: 0 9px 0 13px; font-size: 14px; font-weight: 400; color: #34479b; }
h2 svg { color: #888; }
h2::after { content: ""; flex: 1; height: 1px; margin-left: 4px; background: #e3e3e3; }
.folders { display: grid; grid-template-columns: repeat(auto-fill, 267px); grid-auto-rows: 77px; min-height: 256px; padding: 16px 0 0 54px; align-content: start; }
article { display: flex; gap: 7px; }
article > svg { margin-top: 5px; }
article b { font-weight: 400; color: #111; }
article p { color: #7a7a7a; }
article .pin { margin: 2px 0 0 2px; }
table { width: calc(100% - 23px); margin: 14px 0 0 22px; table-layout: fixed; border-collapse: collapse; }
td { height: 29px; padding: 0; white-space: nowrap; }
.ic { width: 20px; padding-left: 5px; }
.th { width: 41px; } .th svg { margin-left: 4px; }
tr:not(.sel) .th svg { margin-left: 7px; }
.path { width: 382px; color: #707070; }
tr.sel { background: #cce8ff; outline: 1px solid #99d1ff; outline-offset: -1px; }
.pre { white-space: pre; }

.status { display: flex; align-items: center; flex: none; height: 28px; padding: 0 9px 0 16px; color: #31507c; }
.status > span { padding-right: 11px; margin-right: 11px; border-right: 1px solid #eee; }
.views { display: flex; gap: 9px; margin-left: auto; }

/* taskbar */
.task { position: relative; display: flex; align-items: stretch; flex: none; height: 35px; padding-right: 5px; background: #101010; color: #eee; }
.task > button { width: 43px; }
.task .act { background: #333; border-bottom: 3px solid #76b9ed; padding-top: 3px; }
.task .run { position: relative; }
.run::after { content: ""; position: absolute; left: 5px; right: 5px; bottom: 0; height: 3px; background: #76b9ed; }
.tray { display: flex; align-items: center; margin-left: auto; gap: 10px; width: 197px; }
.lang { margin-left: 4px; }
.clock { margin-left: 4px; }
.note { position: absolute; right: 22px; top: 11px; }
.mark { position: absolute; right: 8px; bottom: 5px; display: flex; align-items: flex-end; gap: 6px; }
.mark span { color: #222; font: 700 21px/28px "Open Sans", sans-serif; -webkit-text-stroke: 4px #fff; paint-order: stroke fill; }
```
